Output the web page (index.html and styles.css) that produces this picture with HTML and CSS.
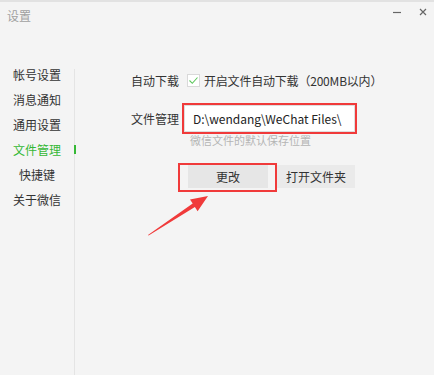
FILE: index.html
```html
<!DOCTYPE html>
<html lang="zh-CN">
<head>
<meta charset="utf-8">
<title>设置</title>
<link rel="stylesheet" href="styles.css">
</head>
<body>
<div class="window">
  <header class="titlebar">
    <span class="title">设置</span>
    <div class="controls">
      <svg class="ctl" width="14" height="14" viewBox="0 0 14 14"><line x1="3" y1="7.5" x2="11" y2="7.5" stroke="#666" stroke-width="1.2"/></svg>
      <svg class="ctl" width="14" height="14" viewBox="0 0 14 14"><path d="M4 4 L10 10 M10 4 L4 10" stroke="#666" stroke-width="1.2" fill="none"/></svg>
    </div>
  </header>
  <div class="body">
    <nav class="sidebar">
      <div class="nav-item">帐号设置</div>
      <div class="nav-item">消息通知</div>
      <div class="nav-item">通用设置</div>
      <div class="nav-item active">文件管理</div>
      <div class="nav-item">快捷键</div>
      <div class="nav-item">关于微信</div>
    </nav>
    <main class="content">
      <div class="row row-auto">
        <span class="label">自动下载</span>
        <span class="checkbox"><svg width="11" height="11" viewBox="0 0 11 11"><path d="M1.5 5.5 L4.3 8.3 L9.5 2.5" stroke="#5cc75c" stroke-width="1.1" fill="none"/></svg></span>
        <span class="check-text">开启文件自动下载（200MB以内）</span>
      </div>
      <div class="row row-path">
        <span class="label">文件管理</span>
        <div class="path-input">D:\wendang\WeChat Files\</div>
      </div>
      <div class="hint">微信文件的默认保存位置</div>
      <div class="buttons">
        <button class="btn btn-change">更改</button>
        <button class="btn btn-open">打开文件夹</button>
      </div>
    </main>
  </div>
  <svg class="annot" width="434" height="375" viewBox="0 0 434 375">
    <rect x="183" y="104" width="173" height="29" fill="none" stroke="#f03a3a" stroke-width="2"/>
    <rect x="179" y="164" width="97" height="27" fill="none" stroke="#f03a3a" stroke-width="2"/>
    <polygon points="148,235 192.7,203.6 190,199.4 208,196 197.6,211.2 194.9,207 148.6,235.6" fill="#f03a3a"/>
  </svg>
</div>
</body>
</html>
```

FILE: styles.css
```css
* { box-sizing: border-box; }
html, body { margin: 0; padding: 0; }
body {
  background: #f4f4f4;
  font-family: "Noto Sans CJK SC", "Noto Sans", sans-serif;
  color: #333;
}
.window {
  position: relative;
  width: 434px;
  height: 375px;
  overflow: hidden;
  background: #f4f4f4;
}
.titlebar {
  height: 28px;
  border-top: 2px solid #e2e2e2;
  display: flex;
  align-items: center;
  justify-content: space-between;
  padding: 0 0 0 7px;
}
.title {
  font-size: 12px;
  color: #a0a0a0;
  line-height: 26px;
  margin-top: 1px;
}
.controls {
  display: flex;
  align-items: center;
  gap: 12px;
  padding-right: 4px;
  margin-top: -6px;
}
.ctl { display: block; }
.body {
  display: flex;
  height: 347px;
}
.sidebar {
  width: 74px;
  padding-top: 34px;
  flex: none;
}
.nav-item {
  position: relative;
  height: 25px;
  line-height: 25px;
  font-size: 12px;
  text-align: center;
  color: #333;
}
.nav-item.active { color: #35b835; }
.nav-item.active::after {
  content: "";
  position: absolute;
  right: -2px;
  top: 8px;
  width: 2px;
  height: 9px;
  background: #35b835;
}
.content {
  flex: 1;
  margin-top: 41px;
  border-left: 1px solid #e4e4e4;
  padding-left: 56px;
}
.row {
  display: flex;
  align-items: center;
}
.row-auto { height: 22px; }
.row-path { height: 27px; margin-top: 14px; }
.label {
  width: 53px;
  flex: none;
  font-size: 12px;
  color: #333;
}
.checkbox {
  width: 13px;
  height: 13px;
  margin-left: 3px;
  background: #fff;
  border: 1px solid #d9d9d9;
  display: flex;
  align-items: center;
  justify-content: center;
}
.checkbox svg { display: block; }
.check-text {
  margin-left: 4px;
  font-size: 12px;
  letter-spacing: -0.2px;
  color: #333;
  white-space: nowrap;
}
.path-input {
  width: 171px;
  height: 27px;
  background: #fff;
  border: 1px solid #dedede;
  font-size: 12px;
  line-height: 25px;
  padding-left: 8px;
  color: #222;
  white-space: nowrap;
}
.hint {
  margin-left: 59px;
  font-size: 11px;
  line-height: 14px;
  margin-top: 1px;
  color: #b5b5b5;
}
.buttons {
  display: flex;
  gap: 9px;
  margin-top: 18px;
  margin-left: 57px;
}
.btn {
  height: 23px;
  border: none;
  padding: 0;
  font-family: inherit;
  font-size: 12px;
  color: #333;
  background: #e6e6e6;
}
.btn-change { width: 80px; }
.btn-open { width: 78px; background: #eaeaea; }
.annot {
  position: absolute;
  left: 0;
  top: 0;
  pointer-events: none;
}
```
